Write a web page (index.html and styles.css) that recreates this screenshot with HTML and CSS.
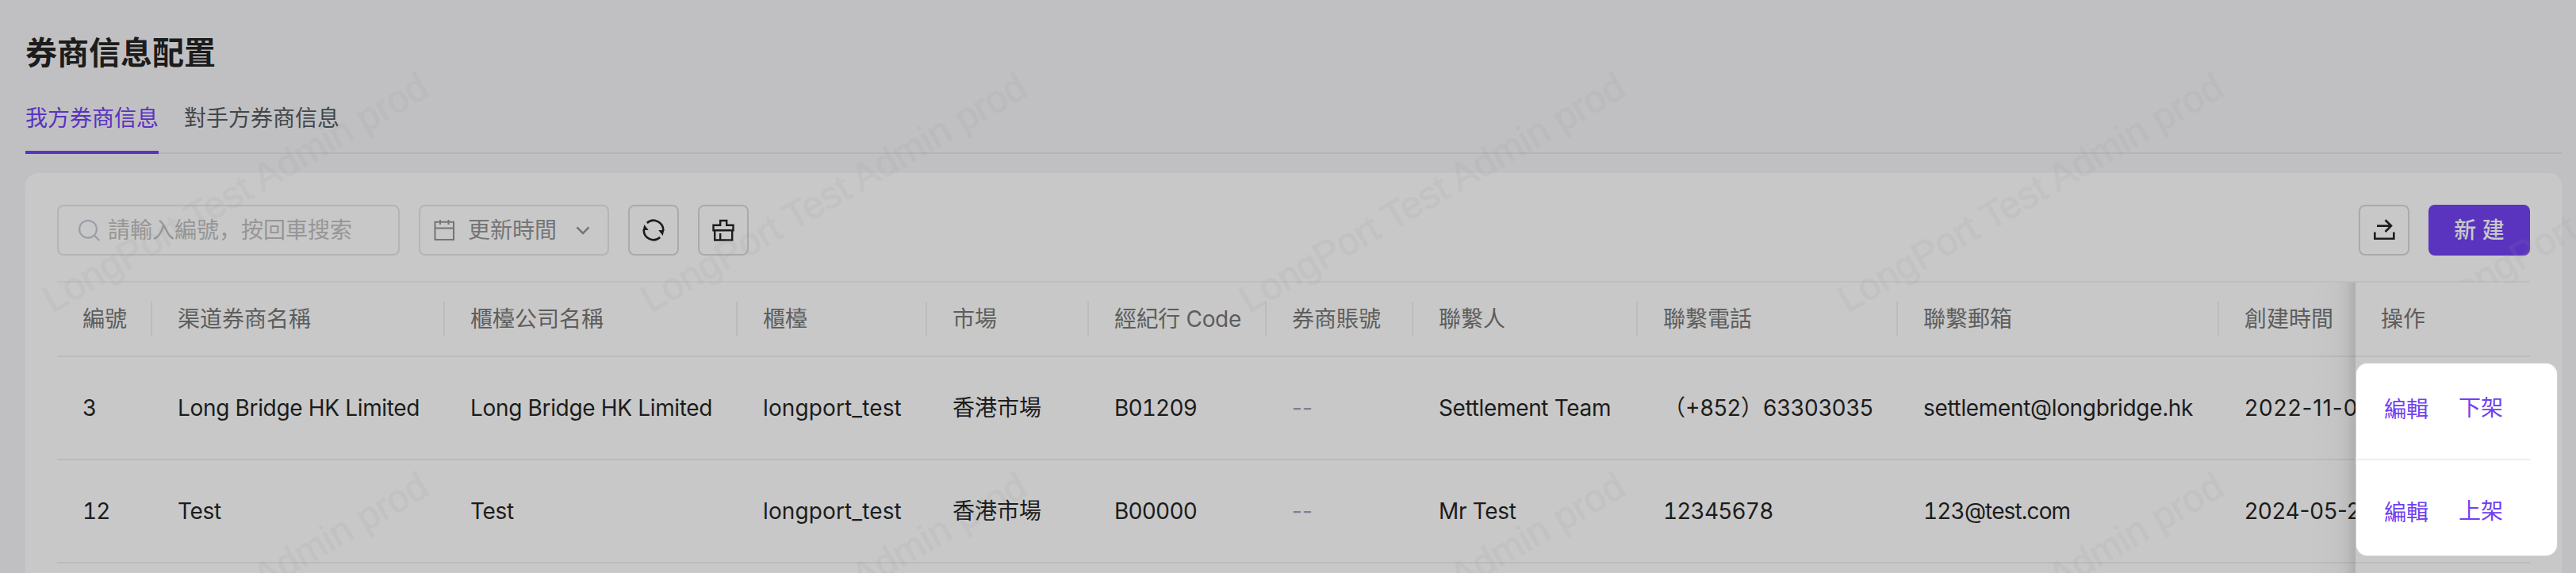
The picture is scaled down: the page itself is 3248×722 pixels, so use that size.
FILE: index.html
```html
<!DOCTYPE html>
<html lang="zh-Hans">
<head>
<meta charset="utf-8">
<title>券商信息配置</title>
<link rel="stylesheet" href="styles.css">
</head>
<body>
<main class="page">
  <h1 class="title">券商信息配置</h1>
  <nav class="tabs">
    <a class="tab tab-active">我方券商信息</a>
    <a class="tab">對手方券商信息</a>
  </nav>
  <section class="card">
    <div class="toolbar">
      <div class="search">
        <svg class="icon-search" width="30" height="30" viewBox="0 0 30 30" fill="none" stroke="currentColor" stroke-width="2.200"><circle cx="13" cy="13.700" r="10.900"/><path d="M20.800 21.500l6.500 6.500"/></svg>
        <span>請輸入編號，按回車搜索</span>
      </div>
      <div class="select">
        <svg width="28" height="28" viewBox="0 0 28 28" fill="none" stroke="currentColor" stroke-width="2"><path d="M2.500 3.800h23.500v22.200H2.500zM2.500 11.500h23.500M9 1v6M19.500 1v6"/></svg>
        <span class="select-label">更新時間</span>
        <svg width="20" height="20" viewBox="0 0 20 20" fill="none" stroke="currentColor" stroke-width="2.600"><path d="M2.500 6.300l7.500 7.500 7.500-7.500"/></svg>
      </div>
      <button class="icon-btn"><svg width="32" height="32" viewBox="0 0 32 32" fill="none" stroke="currentColor" stroke-width="2.600"><path d="M7.800 6.900A12.300 12.300 0 0 1 28.200 17M24.200 25.100A12.300 12.300 0 0 1 3.800 15"/><path d="M22.300 16h7l-1.600 7zM9.700 16h-7l1.600-7z" fill="currentColor" stroke="none"/></svg></button>
      <button class="icon-btn"><svg width="32" height="32" viewBox="0 0 32 32" fill="none" stroke="currentColor" stroke-width="2.400"><path d="M3.500 16.200V9.700h8.700V4h8v5.700h8.300v6.500zM5.200 16.200v12.300h22V16.200M12.200 28.500v-8.500"/></svg></button>
      <span class="spacer"></span>
      <button class="icon-btn"><svg width="32" height="32" viewBox="0 0 32 32" fill="none" stroke="currentColor" stroke-width="2.600"><path d="M4.300 18.500v8.300h24v-8.300M7 10.600h18.500M17.500 3.200l7.500 7.400-7.500 7.400"/></svg></button>
      <button class="primary-btn">新 建</button>
    </div>
    <div class="table">
      <div class="scroll">
        <div class="row head">
          <span>編號</span><span>渠道券商名稱</span><span>櫃檯公司名稱</span><span>櫃檯</span><span>市場</span><span class="snug">經紀行 Code</span><span>券商賬號</span><span>聯繫人</span><span>聯繫電話</span><span>聯繫郵箱</span><span>創建時間</span>
        </div>
        <div class="row">
          <span>3</span><span class="snug">Long Bridge HK Limited</span><span class="snug">Long Bridge HK Limited</span><span class="airy">longport_test</span><span>香港市場</span><span class="num">B01209</span><span class="empty">--</span><span class="snug">Settlement Team</span><span>（+852）63303035</span><span class="snug">settlement@longbridge.hk</span><span class="date">2022-11-01</span>
        </div>
        <div class="row">
          <span class="num">12</span><span class="snug">Test</span><span class="snug">Test</span><span class="airy">longport_test</span><span>香港市場</span><span class="num">B00000</span><span class="empty">--</span><span class="snug">Mr Test</span><span class="num">12345678</span><span class="num">123@test.com</span><span>2024-05-20</span>
        </div>
      </div>
      <div class="fixed">
        <div class="highlight"></div>
        <div class="fixed-head">操作</div>
        <div class="actions actions-lit"><a class="edit">編輯</a><a>下架</a></div>
        <div class="actions"><a class="edit">編輯</a><a>上架</a></div>
      </div>
    </div>
  </section>
</main>
<svg class="watermark" width="3248" height="722">
  <g transform="translate(66 395) rotate(-30)"><text>LongPort Test Admin prod</text></g>
  <g transform="translate(820.500 395) rotate(-30)"><text>LongPort Test Admin prod</text></g>
  <g transform="translate(1575 395) rotate(-30)"><text>LongPort Test Admin prod</text></g>
  <g transform="translate(2329.500 395) rotate(-30)"><text>LongPort Test Admin prod</text></g>
  <g transform="translate(3084 395) rotate(-30)"><text>LongPort Test Admin prod</text></g>
  <g transform="translate(66 898) rotate(-30)"><text>LongPort Test Admin prod</text></g>
  <g transform="translate(820.500 898) rotate(-30)"><text>LongPort Test Admin prod</text></g>
  <g transform="translate(1575 898) rotate(-30)"><text>LongPort Test Admin prod</text></g>
  <g transform="translate(2329.500 898) rotate(-30)"><text>LongPort Test Admin prod</text></g>
</svg>
</body>
</html>
```
FILE: styles.css
```css
* { box-sizing: border-box; }
body {
  margin: 0;
  width: 3248px;
  height: 722px;
  overflow: hidden;
  position: relative;
  background: #c0c0c2;
  color: #1c1c1c;
  font: 28px/44px Inter, "Noto Sans CJK SC", sans-serif;
}
.page { padding: 37px 18px 0 32px; }
.title { margin: 0; font-size: 40px; line-height: 60px; font-weight: 600; }
.tabs {
  display: flex;
  gap: 32px;
  height: 97px;
  padding-top: 30px;
  border-bottom: 2px solid #b4b4b7;
}
.tab { color: #43474a; height: 67px; white-space: nowrap; }
.tab-active { color: #5a33bf; border-bottom: 4px solid #5a33bf; }
.card {
  height: 540px;
  margin-top: 24px;
  padding: 40px 40px 0;
  border-radius: 16px;
  background: #c8c8c8;
}
.toolbar { display: flex; gap: 24px; height: 64px; align-items: center; }
.search, .select {
  display: flex;
  align-items: center;
  height: 64px;
  border: 2px solid #b4b4b9;
  border-radius: 8px;
  white-space: nowrap;
}
.search { width: 432px; padding-left: 24px; gap: 8px; color: #969696; }
.icon-search { color: #9a9fa6; }
.select { width: 240px; padding-left: 16px; color: #757575; }
.select-label { margin: 0 23px 0 16px; }
.icon-btn {
  display: flex;
  align-items: center;
  justify-content: center;
  width: 64px;
  height: 64px;
  padding: 0;
  border: 2px solid #aaa;
  border-radius: 8px;
  background: transparent;
  color: #1c1c1c;
}
.primary-btn {
  width: 128px;
  height: 64px;
  padding: 0;
  border: 0;
  border-radius: 8px;
  background: #5a33bf;
  color: #c8c8c8;
  font: inherit;
  font-weight: 500;
}
.spacer { flex: 1; }
.table { display: flex; height: 368px; margin-top: 32px; border-top: 2px solid #bfbfbf; }
.scroll { width: 2898px; overflow: hidden; }
.row {
  display: grid;
  grid-template-columns: 120px 369px 369px 239px 204px 224px 185px 283px 328px 405px 240px;
  width: 2966px;
  height: 130px;
  align-items: center;
  border-bottom: 2px solid #bbb;
}
.row > span { padding-left: 32px; white-space: nowrap; }
.row > .snug { letter-spacing: -.34px; }
.row > .airy { letter-spacing: .12px; }
.row > .num { font-variant-numeric: tabular-nums; letter-spacing: -.85px; }
.row > .date { letter-spacing: .9px; }
.row > .empty { color: #7d818c; }
.head { height: 94px; color: #5d5d5d; }
.head > span { border-right: 2px solid #bcbcbc; height: 44px; }
.head > span:last-child { border-right: 0; }
.fixed {
  position: relative;
  z-index: 3;
  width: 220px;
  background: #c8c8c8;
}
.fixed::before {
  content: "";
  position: absolute;
  top: 0;
  bottom: 0;
  left: -60px;
  width: 60px;
  background: linear-gradient(to left, rgba(0,0,0,.13), rgba(0,0,0,.05) 12px, rgba(0,0,0,.02) 24px, transparent);
}
.highlight {
  position: absolute;
  top: 102px;
  left: 1px;
  width: 253px;
  height: 242px;
  border-radius: 14px;
  background: #fff;
  box-shadow: 0 0 2px #e2e2e2;
}
.fixed-head {
  height: 94px;
  padding: 24px 0 0 32px;
  border-bottom: 2px solid #bbb;
  color: #5d5d5d;
}
.actions {
  position: relative;
  display: flex;
  gap: 38px;
  height: 130px;
  padding: 42px 0 0 36px;
  border-bottom: 2px solid #bbb;
  color: #7040f2;
}
.actions-lit { border-color: #eee; }
.edit { padding-top: 2px; }
.watermark { position: absolute; inset: 0; z-index: 2; pointer-events: none; }
.watermark text {
  font: 48px "Liberation Sans", sans-serif;
  fill: #999;
  stroke: #999;
  stroke-width: .8px;
  opacity: .12;
}
```
